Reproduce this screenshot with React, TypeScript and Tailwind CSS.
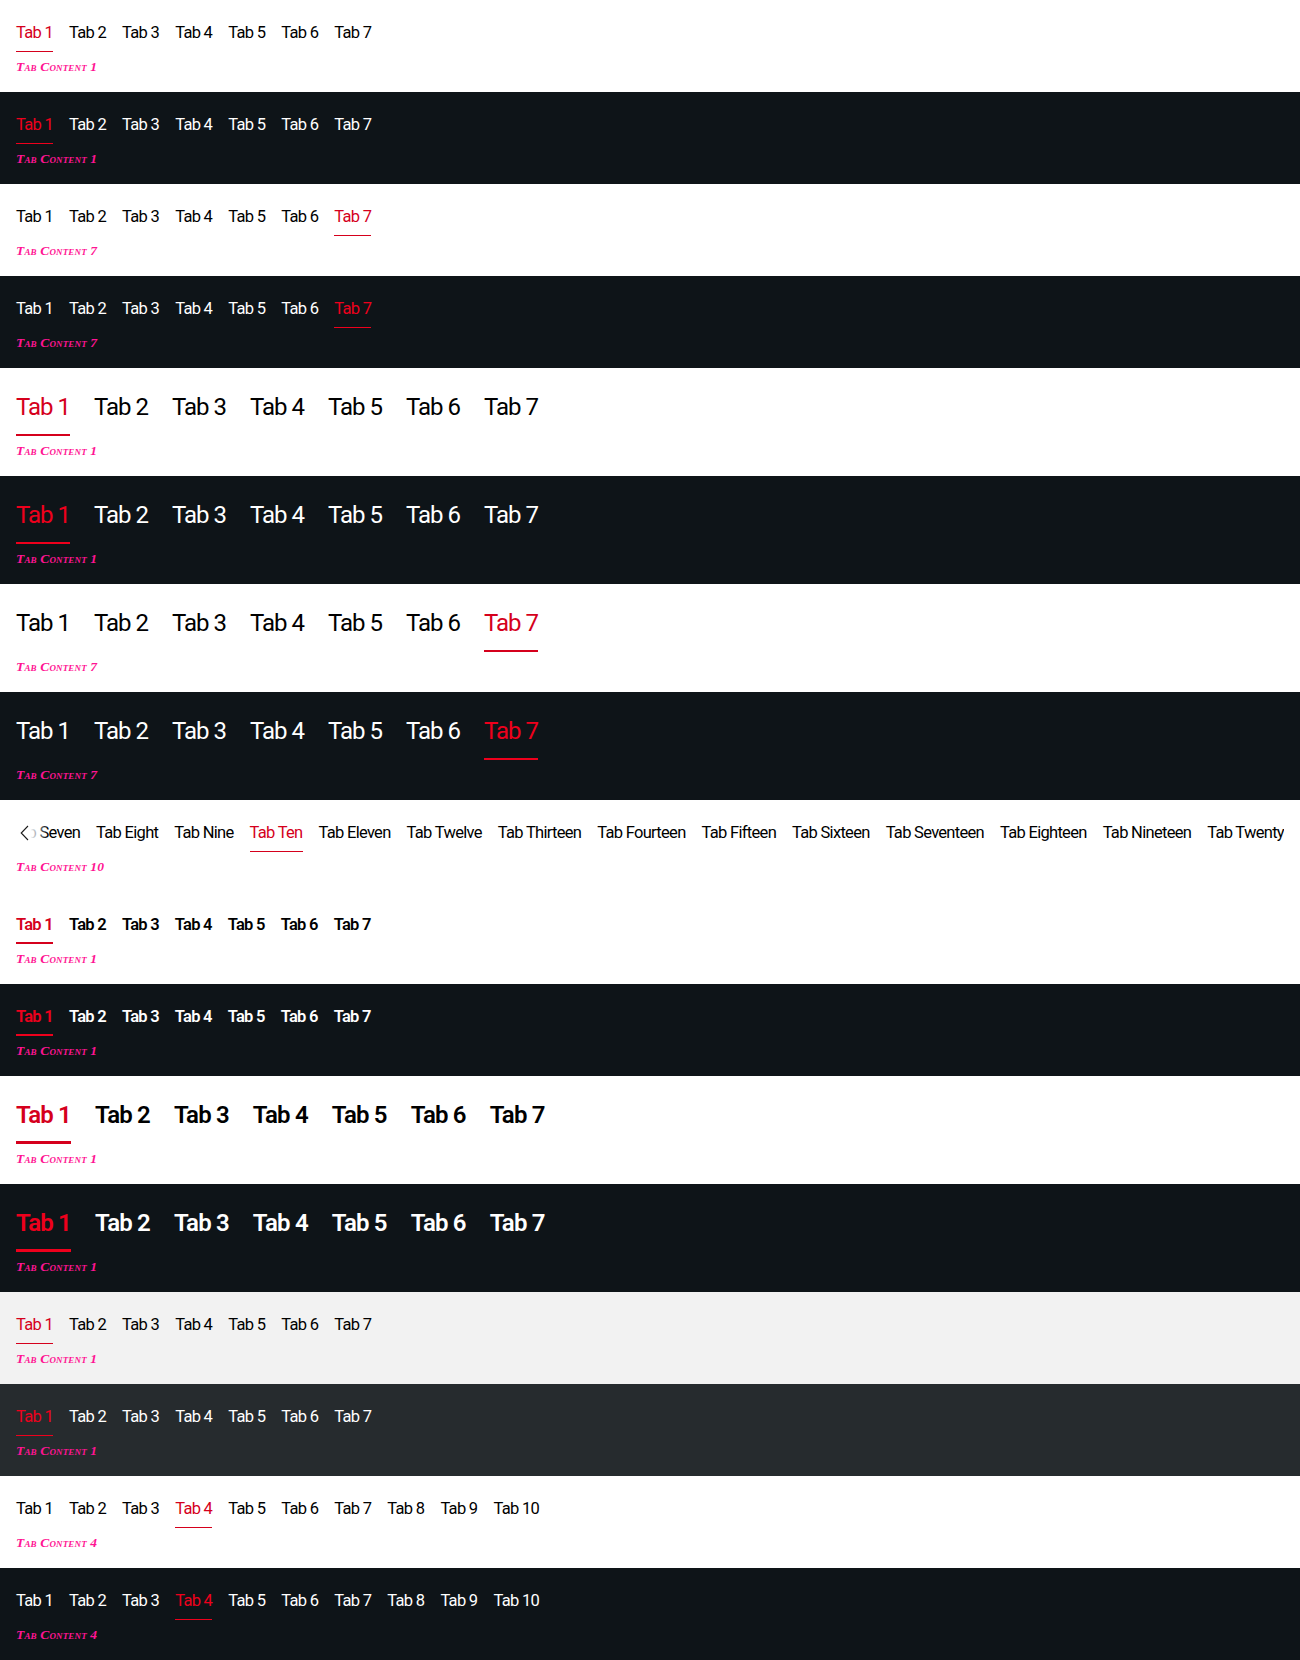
import { useEffect, useRef } from "react";

type Theme = "light" | "dark" | "light-surface" | "dark-surface";
type Size = "small" | "large";
type Weight = "regular" | "semibold";

const BG: Record<Theme, string> = {
  light: "bg-white",
  dark: "bg-[#0e1418]",
  "light-surface": "bg-[#f2f2f2]",
  "dark-surface": "bg-[#262b2e]",
};

const isDark = (t: Theme) => t === "dark" || t === "dark-surface";

function Content({ label }: { label: string }) {
  return (
    <p className="mt-[5px] font-['Liberation_Serif',serif] text-[13.5px] tracking-[0.15px] leading-5 font-bold italic text-[#ff1493] [font-variant:small-caps]">
      {label}
    </p>
  );
}

function tabClass(theme: Theme, size: Size, weight: Weight, active: boolean) {
  const base = "shrink-0 whitespace-nowrap";
  const sizeCls =
    size === "small"
      ? weight === "regular"
        ? "text-[16.5px] tracking-[-0.7px] leading-6 pb-[6px] border-b"
        : "text-[16.5px] tracking-[-0.75px] leading-6 pb-[5px] border-b-2 font-semibold"
      : weight === "regular"
      ? "text-[24px] tracking-[-1px] leading-9 pb-[9px] border-b-2"
      : "text-[24px] tracking-[-0.85px] leading-9 pb-[8px] border-b-[3px] font-semibold";
  let color: string;
  if (active) {
    color = isDark(theme) ? "text-[#ee001c] border-[#ee001c]" : "text-[#d5001c] border-[#d5001c]";
  } else {
    color = isDark(theme) ? "text-white border-transparent" : "text-black border-transparent";
  }
  return `${base} ${sizeCls} ${color}`;
}

function TabsSection({
  theme,
  size = "small",
  weight = "regular",
  count = 7,
  active,
}: {
  theme: Theme;
  size?: Size;
  weight?: Weight;
  count?: number;
  active: number;
}) {
  const tabs = Array.from({ length: count }, (_, i) => i + 1);
  return (
    <section className={`${BG[theme]} px-4 pt-[21px] pb-[15px]`}>
      <div className={`flex ${size === "small" ? "gap-4" : "gap-6"}`}>
        {tabs.map((n) => (
          <button key={n} type="button" className={tabClass(theme, size, weight, n === active)}>
            Tab {n}
          </button>
        ))}
      </div>
      <Content label={`Tab Content ${active}`} />
    </section>
  );
}

const WORDS = [
  "One",
  "Two",
  "Three",
  "Four",
  "Five",
  "Six",
  "Seven",
  "Eight",
  "Nine",
  "Ten",
  "Eleven",
  "Twelve",
  "Thirteen",
  "Fourteen",
  "Fifteen",
  "Sixteen",
  "Seventeen",
  "Eighteen",
  "Nineteen",
  "Twenty",
];

function ScrollerSection() {
  const ref = useRef<HTMLDivElement>(null);
  useEffect(() => {
    const el = ref.current;
    if (el) el.scrollLeft = el.scrollWidth;
  }, []);
  return (
    <section className="bg-white px-4 pt-[21px] pb-[15px]">
      <div className="relative">
        <div ref={ref} className="flex gap-4 overflow-hidden">
          {WORDS.map((w, i) => (
            <button key={w} type="button" className={tabClass("light", "small", "regular", i === 9)}>
              Tab {w}
            </button>
          ))}
        </div>
        <div className="pointer-events-none absolute left-0 top-0 flex h-6 w-8 items-center bg-linear-to-r from-white from-45% to-transparent">
          <svg width="10" height="16" viewBox="0 0 10 16" className="ml-[4px]" fill="none">
            <path d="M8 1 L1.2 8 L8 15" stroke="#1a1a1a" strokeWidth="1.1" />
          </svg>
        </div>
      </div>
      <Content label="Tab Content 10" />
    </section>
  );
}

export default function App() {
  return (
    <div className="w-full font-[Roboto,'Liberation_Sans',sans-serif]">
      <TabsSection theme="light" active={1} />
      <TabsSection theme="dark" active={1} />
      <TabsSection theme="light" active={7} />
      <TabsSection theme="dark" active={7} />
      <TabsSection theme="light" size="large" active={1} />
      <TabsSection theme="dark" size="large" active={1} />
      <TabsSection theme="light" size="large" active={7} />
      <TabsSection theme="dark" size="large" active={7} />
      <ScrollerSection />
      <TabsSection theme="light" weight="semibold" active={1} />
      <TabsSection theme="dark" weight="semibold" active={1} />
      <TabsSection theme="light" size="large" weight="semibold" active={1} />
      <TabsSection theme="dark" size="large" weight="semibold" active={1} />
      <TabsSection theme="light-surface" active={1} />
      <TabsSection theme="dark-surface" active={1} />
      <TabsSection theme="light" count={10} active={4} />
      <TabsSection theme="dark" count={10} active={4} />
    </div>
  );
}
